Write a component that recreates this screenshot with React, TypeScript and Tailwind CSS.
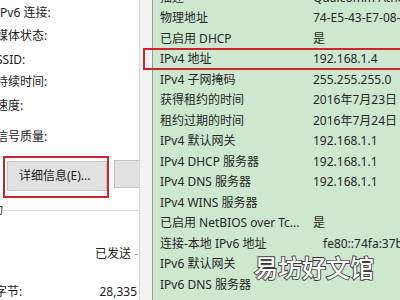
import { FC } from 'react';

const font = "font-['Noto_Sans','Noto_Sans_CJK_SC',sans-serif]";

// rows of the details list (right panel)
const rows = [
  { label: '描述', value: 'Qualcomm Atheros' },
  { label: '物理地址', value: '74-E5-43-E7-08-6A' },
  { label: '已启用 DHCP', value: '是' },
  { label: 'IPv4 地址', value: '192.168.1.4' },
  { label: 'IPv4 子网掩码', value: '255.255.255.0' },
  { label: '获得租约的时间', value: '2016年7月23日' },
  { label: '租约过期的时间', value: '2016年7月24日' },
  { label: 'IPv4 默认网关', value: '192.168.1.1' },
  { label: 'IPv4 DHCP 服务器', value: '192.168.1.1' },
  { label: 'IPv4 DNS 服务器', value: '192.168.1.1' },
  { label: 'IPv4 WINS 服务器', value: '' },
  { label: '已启用 NetBIOS over Tc...', value: '是' },
  { label: '连接-本地 IPv6 地址', value: 'fe80::74fa:37b5', indent: true },
  { label: 'IPv6 默认网关', value: '' },
  { label: 'IPv6 DNS 服务器', value: '' },
];

const leftLabels = [
  { text: 'IPv6 连接:', mt: 'mt-0' },
  { text: '媒体状态:', mt: 'mt-[7px]' },
  { text: 'SSID:', mt: 'mt-[8px]' },
  { text: '持续时间:', mt: 'mt-[6px]' },
  { text: '速度:', mt: 'mt-[8px]' },
  { text: '信号质量:', mt: 'mt-[15px]' },
];

const App: FC = () => {
  return (
    <div className={`relative w-[400px] h-[300px] overflow-hidden flex bg-white text-[12px] ${font}`}>
      {/* Left: status dialog */}
      <div className="w-[140px] shrink-0 h-full bg-white border-r border-[#d4d4d4] overflow-hidden text-[#1c1c1c] flex flex-col pt-[5px]">
        {leftLabels.map((l) => (
          <div key={l.text} className={`h-[16px] leading-[16px] whitespace-nowrap -ml-[4px] ${l.mt}`}>
            {l.text}
          </div>
        ))}

        {/* buttons */}
        <div className="mt-[11px] flex items-start">
          <div className="ml-[3px] w-[107px] h-[42px] border-2 border-[#d2232a] pt-[3px] pl-[2px]">
            <div className="w-[100px] h-[30px] bg-[#e1e1e1] border border-[#c4c4c4] flex items-center pl-[11px] whitespace-nowrap">
              详细信息(E)...
            </div>
          </div>
          <div className="ml-[5px] mt-[4px] w-[30px] h-[28px] bg-[#e1e1e1] border border-[#c4c4c4] border-r-0" />
        </div>

        {/* activity group line */}
        <div className="mt-[7px] flex items-center h-[12px] overflow-hidden">
          <span className="-ml-[21px] w-[24px] whitespace-nowrap leading-[12px] text-[#333]">活动</span>
          <div className="ml-[1px] flex-1 h-px bg-[#dcdcdc]" />
        </div>

        <div className="mt-[31px] h-[16px] leading-[16px] text-right pr-[1px] whitespace-nowrap">
          已发送 <span className="text-[#999]">-</span>
        </div>

        <div className="mt-[22px] h-[16px] leading-[16px] flex justify-between whitespace-nowrap">
          <span className="-ml-[5px]">字节:</span>
          <span className="pr-[2px]">28,335</span>
        </div>
      </div>

      {/* gap between windows */}
      <div className="w-[13px] shrink-0 h-full bg-[#f3f3f3] border-r border-[#9c9c9c]" />

      {/* Right: network connection details */}
      <div className="flex-1 h-full bg-[#cde8cf] overflow-hidden text-[#262626]">
        <div className="-mt-[12.75px] pl-[7px] flex flex-col">
          {rows.map((r) => (
            <div key={r.label} className="h-[20.5px] flex items-center whitespace-nowrap">
              <span className="w-[153px] shrink-0 overflow-hidden">{r.label}</span>
              <span className={r.indent ? 'pl-[10px]' : ''}>{r.value}</span>
            </div>
          ))}
        </div>
      </div>

      {/* red highlight on IPv4 row */}
      <div className="absolute left-[143px] top-[48px] w-[270px] h-[22px] border-2 border-[#d2232a] pointer-events-none" />

      {/* watermark */}
      <div className="absolute left-[254px] top-[251px] text-[24px] leading-[32px] text-white font-['Noto_Sans_CJK_SC',sans-serif] font-medium whitespace-nowrap [-webkit-text-stroke:1.8px_#3a3a3a] [paint-order:stroke_fill]">
        易坊好文馆
      </div>
    </div>
  );
};

export default App;
